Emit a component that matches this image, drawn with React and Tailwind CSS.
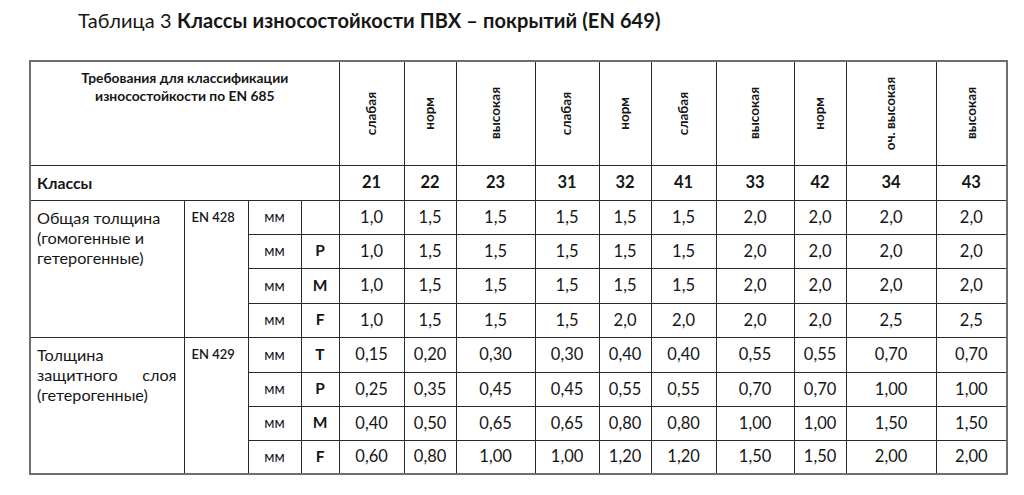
import React from "react";

const COL_WIDTHS = [154, 64, 53, 38, 65, 52, 79, 64, 52, 65, 78, 52, 90, 71];

const LEVELS = ["слабая", "норм", "высокая", "слабая", "норм", "слабая", "высокая", "норм", "оч. высокая", "высокая"];
const CLASSES = ["21", "22", "23", "31", "32", "41", "33", "42", "34", "43"];

const GROUPS = [
  {
    label: (
      <>
        Общая толщина
        <br />
        (гомогенные и
        <br />
        гетерогенные)
      </>
    ),
    norm: "EN 428",
    rows: [
      { letter: "", h: "h-[34px]", values: ["1,0", "1,5", "1,5", "1,5", "1,5", "1,5", "2,0", "2,0", "2,0", "2,0"] },
      { letter: "P", h: "h-[34px]", values: ["1,0", "1,5", "1,5", "1,5", "1,5", "1,5", "2,0", "2,0", "2,0", "2,0"] },
      { letter: "M", h: "h-[35px]", values: ["1,0", "1,5", "1,5", "1,5", "1,5", "1,5", "2,0", "2,0", "2,0", "2,0"] },
      { letter: "F", h: "h-[34px]", values: ["1,0", "1,5", "1,5", "1,5", "2,0", "2,0", "2,0", "2,0", "2,5", "2,5"] },
    ],
  },
  {
    label: (
      <>
        <div>Толщина</div>
        <div className="flex justify-between">
          <span>защитного</span>
          <span>слоя</span>
        </div>
        <div>(гетерогенные)</div>
      </>
    ),
    norm: "EN 429",
    rows: [
      { letter: "T", h: "h-[35px]", values: ["0,15", "0,20", "0,30", "0,30", "0,40", "0,40", "0,55", "0,55", "0,70", "0,70"] },
      { letter: "P", h: "h-[34px]", values: ["0,25", "0,35", "0,45", "0,45", "0,55", "0,55", "0,70", "0,70", "1,00", "1,00"] },
      { letter: "M", h: "h-[34px]", values: ["0,40", "0,50", "0,65", "0,65", "0,80", "0,80", "1,00", "1,00", "1,50", "1,50"] },
      { letter: "F", h: "h-[34px]", values: ["0,60", "0,80", "1,00", "1,00", "1,20", "1,20", "1,50", "1,50", "2,00", "2,00"] },
    ],
  },
];

const cell = "border border-[#2a2a2a] p-0";

export default function App() {
  return (
    <div className="w-[1024px] h-[495px] bg-white text-[#161616] font-['Lato','Liberation_Sans',sans-serif] pt-[7px]">
      <h1 className="pl-[78px] text-[20px] leading-[26px] tracking-[0.1px]">
        Таблица 3 <span className="font-bold">Классы износостойкости ПВХ – покрытий (EN 649)</span>
      </h1>

      <table className="ml-[29px] mt-[27px] w-[977px] table-fixed border-collapse border-2 border-[#6e6e6e]">
        <colgroup>
          {COL_WIDTHS.map((w, i) => (
            <col key={i} style={{ width: w }} />
          ))}
        </colgroup>
        <tbody>
          <tr className="h-[104px]">
            <td colSpan={4} className={`${cell} align-top text-center pt-[7px]`}>
              <div className="text-[13.8px] leading-[18px] font-bold">
                Требования для классификации
                <br />
                износостойкости по EN 685
              </div>
            </td>
            {LEVELS.map((l, i) => (
              <td key={i} className={`${cell} align-middle`}>
                <div className="flex justify-center items-center">
                  <span className="[writing-mode:vertical-rl] rotate-180 text-[13.5px] font-bold leading-none whitespace-nowrap">
                    {l}
                  </span>
                </div>
              </td>
            ))}
          </tr>

          <tr className="h-[35px]">
            <td colSpan={4} className={`${cell} pl-[6px] text-[15.8px] font-bold`}>
              Классы
            </td>
            {CLASSES.map((c) => (
              <td key={c} className={`${cell} text-center text-[16.5px] font-bold`}>
                {c}
              </td>
            ))}
          </tr>

          {GROUPS.map((g, gi) =>
            g.rows.map((r, ri) => (
              <tr key={`${gi}-${ri}`} className={r.h}>
                {ri === 0 && (
                  <>
                    <td rowSpan={4} className={`${cell} align-top pl-[6px] pr-[7px] pt-[7px] text-[16.2px] leading-[20px]`}>
                      {g.label}
                    </td>
                    <td rowSpan={4} className={`${cell} align-top pl-[7px] pt-[9px] text-[13px] leading-[15px] font-semibold`}>
                      {g.norm}
                    </td>
                  </>
                )}
                <td className={`${cell} text-center text-[14.5px]`}>мм</td>
                <td className={`${cell} text-center text-[15.5px] font-bold`}>{r.letter}</td>
                {r.values.map((v, vi) => (
                  <td key={vi} className={`${cell} text-center text-[16.5px]`}>
                    {v}
                  </td>
                ))}
              </tr>
            ))
          )}
        </tbody>
      </table>
    </div>
  );
}
